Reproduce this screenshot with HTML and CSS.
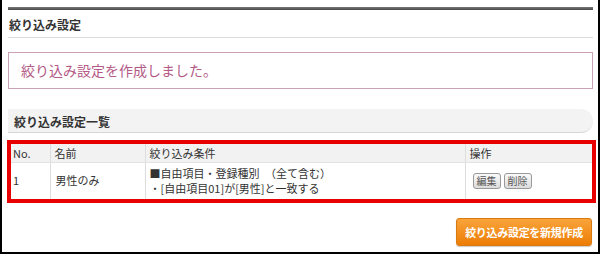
FILE: index.html
```html
<!DOCTYPE html>
<html lang="ja">
<head>
    <meta charset="UTF-8">
    <title>絞り込み設定</title>
    <link rel="stylesheet" href="styles.css">
</head>
<body>
<div class="topbar"></div>
<h2 class="title">絞り込み設定</h2>
<div class="msg">絞り込み設定を作成しました。</div>
<h3 class="section">絞り込み設定一覧</h3>
<div class="redbox">
    <table class="list">
        <tr>
            <th class="c1">No.</th>
            <th class="c2">名前</th>
            <th class="c3">絞り込み条件</th>
            <th class="c4">操作</th>
        </tr>
        <tr>
            <td>1</td>
            <td>男性のみ</td>
            <td>■自由項目・登録種別　（全て含む）<br>・[自由項目01]が[男性]と一致する</td>
            <td><span class="btn">編集</span><span class="btn">削除</span></td>
        </tr>
    </table>
</div>
<div class="foot">
    <span class="newbtn">絞り込み設定を新規作成</span>
</div>
</body>
</html>
```

FILE: styles.css
```css
*{
    margin: 0;
    padding: 0;
    box-sizing: border-box;
}
html,body{
    width: 100%;
    height: 100%;
    overflow: hidden;
}
body{
    height: 254px;
    border: 2px solid #000;
    border-top: 0;
    padding: 7px 5px 0 6px;
    background: #fff;
    font-family: "Noto Sans CJK JP", "Liberation Sans", sans-serif;
    font-size: 11px;
    color: #333;
}
.topbar{
    height: 3px;
    background: linear-gradient(#777, #4a4a4a);
}
.title{
    height: 28px;
    line-height: 29px;
    font-size: 12px;
    font-weight: bold;
    color: #333;
    border-bottom: 1px solid #ddd;
    padding-left: 1px;
}
.msg{
    margin-top: 14px;
    height: 37px;
    border: 1px solid #c9a2b6;
    padding-left: 12px;
    line-height: 35px;
    font-size: 14px;
    color: #b35a86;
}
.section{
    margin-top: 20px;
    height: 24px;
    line-height: 25px;
    padding-left: 6px;
    background: #f3f3f3;
    border-radius: 0 12px 12px 0;
    border-bottom: 1px solid #d6d6d6;
    font-size: 12px;
    font-weight: bold;
    color: #333;
}
.redbox{
    margin: 7px -3px 0 -1px;
    border: 4px solid #e80000;
}
.list{
    width: 100%;
    border-collapse: collapse;
}
.list th,.list td{
    text-align: left;
    font-weight: normal;
    padding: 0 4px;
    border-left: 1px solid #ddd;
    vertical-align: middle;
}
.list th:first-child,.list td:first-child{
    border-left: 0;
    padding-left: 2px;
}
.list th{
    height: 18px;
    line-height: 16px;
    background: #f2f2f2;
    border-bottom: 1px solid #e2e2e2;
}
.list td{
    height: 37px;
    line-height: 15px;
}
.c1{ width: 39px; }
.c2{ width: 95px; }
.c3{ width: 320px; }
.list td:nth-child(2){ padding-left: 5px; }
.btn{
    display: inline-block;
    height: 16px;
    line-height: 13px;
    padding: 0 3px;
    margin-left: 3px;
    font-size: 10px;
    color: #555;
    border: 1px solid #999;
    border-radius: 3px;
    background: linear-gradient(#fafafa, #dcdcdc);
}
.foot{
    display: flex;
    justify-content: flex-end;
    margin-top: 15px;
    padding-right: 1px;
}
.newbtn{
    width: 136px;
    height: 28px;
    line-height: 27px;
    text-align: center;
    font-size: 11px;
    letter-spacing: -0.3px;
    font-weight: bold;
    color: #fff;
    border: 1px solid #d9790f;
    border-radius: 3px;
    background: linear-gradient(#f9a43a, #ec7d06);
    box-shadow: 0 1px 1px rgba(0,0,0,.2);
}
```
